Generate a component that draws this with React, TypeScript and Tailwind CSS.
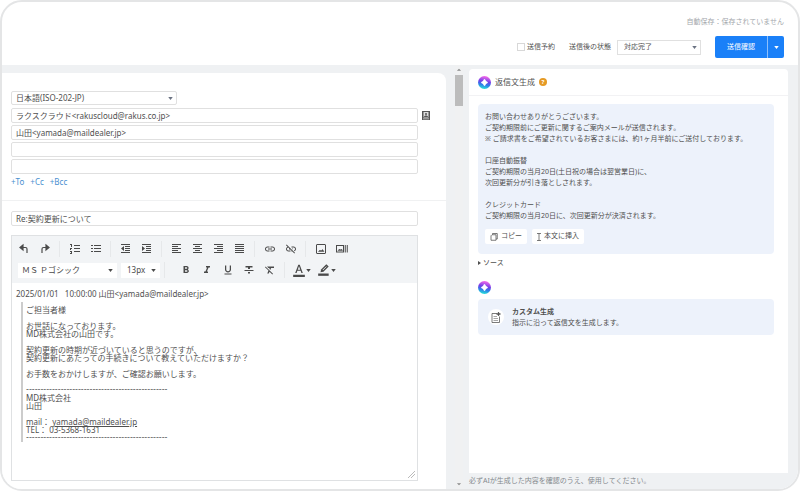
import type { ReactNode } from "react";
import {
  MdArrowDropDown,
  MdArrowDropUp,
  MdFormatBold,
  MdFormatClear,
  MdFormatColorText,
  MdFormatItalic,
  MdFormatStrikethrough,
  MdFormatUnderlined,
  MdInsertLink,
  MdLinkOff,
} from "react-icons/md";

function Caret({ className = "" }: { className?: string }) {
  return (
    <svg viewBox="0 0 6 4" className={`pointer-events-none h-[3px] w-[5px] ${className}`} fill="currentColor">
      <path d="M0 0h6L3 4z" />
    </svg>
  );
}

function UndoIcon() {
  return (
    <svg viewBox="0 0 24 24" className="size-3" fill="none" stroke="currentColor" strokeWidth="2.4">
      <path d="M6 9h9a3 3 0 0 1 3 3v8" />
      <path d="M10 4 4 9l6 5z" fill="currentColor" />
    </svg>
  );
}

function RedoIcon() {
  return (
    <svg viewBox="0 0 24 24" className="size-3" fill="none" stroke="currentColor" strokeWidth="2.4">
      <path d="M18 9H9a3 3 0 0 0-3 3v8" />
      <path d="m14 4 6 5-6 5z" fill="currentColor" />
    </svg>
  );
}

// text layout icons, drawn on a 10px grid so the rules stay sharp
function LineIcon({ d }: { d: string }) {
  return (
    <svg viewBox="0 0 10 10" className="size-2.5" fill="currentColor">
      <path d={d} />
    </svg>
  );
}

const lines = {
  numbered: "M4 1h6v1H4zM4 4h6v1H4zM4 7h6v1H4zM0 0h2v3H1V1H0zM0 4h2v1H1v1H0zM0 7h2v3H0V9h1V8H0z",
  bulleted: "M3 1h7v1H3zM3 4h7v1H3zM3 7h7v1H3zM0 1h2v1H0zM0 4h2v1H0zM0 7h2v1H0z",
  outdent: "M0 0h9v1H0zM4 2h5v1H4zM4 4h5v1H4zM4 6h5v1H4zM0 8h9v1H0zM3 2v5L0 4.500z",
  indent: "M0 0h9v1H0zM4 2h5v1H4zM4 4h5v1H4zM4 6h5v1H4zM0 8h9v1H0zM0 2v5l3-2.500z",
  left: "M0 0h9v1H0zM0 2h6v1H0zM0 4h9v1H0zM0 6h6v1H0zM0 8h9v1H0z",
  center: "M0 0h9v1H0zM2 2h5v1H2zM0 4h9v1H0zM2 6h5v1H2zM0 8h9v1H0z",
  right: "M0 0h9v1H0zM3 2h6v1H3zM0 4h9v1H0zM3 6h6v1H3zM0 8h9v1H0z",
  justify: "M0 0h9v1H0zM0 2h9v1H0zM0 4h9v1H0zM0 6h9v1H0zM0 8h9v1H0z",
};

function ImageIcon() {
  return (
    <svg viewBox="0 0 24 24" className="size-3" fill="none" stroke="currentColor" strokeWidth="2">
      <rect x="3" y="3" width="18" height="18" rx="1" />
      <path d="m7 17 3-3 2 2 3-3 3 4z" fill="currentColor" strokeWidth="1" />
    </svg>
  );
}

function MediaIcon() {
  return (
    <svg viewBox="0 0 28 24" className="h-3 w-3.5" fill="none" stroke="currentColor" strokeWidth="2">
      <rect x="3" y="5" width="14" height="13" />
      <path d="m6 15 3-3 2 2 2-2 2 3z" fill="currentColor" strokeWidth="1" />
      <path d="M20.500 4v15M24.500 4v15" strokeWidth="2" />
    </svg>
  );
}

function MarkerIcon() {
  return (
    <svg viewBox="0 0 24 24" className="size-3.5" fill="currentColor">
      <path d="m6 16 1-5 9-9 4 4-9 9z" />
      <path d="m10 12 6-6" stroke="#f2f4f6" strokeWidth="1.500" />
      <path d="M2 18h18v4H2z" />
    </svg>
  );
}

function AiLogo() {
  return (
    <svg viewBox="0 0 26 26" className="size-[13px] shrink-0">
      <defs>
        <linearGradient id="ai" x1="0.700" y1="0" x2="0.500" y2="1">
          <stop offset="0.050" stopColor="#f569e8" />
          <stop offset="0.450" stopColor="#7040ea" />
          <stop offset="0.700" stopColor="#2f7fe8" />
          <stop offset="1" stopColor="#25e0d8" />
        </linearGradient>
      </defs>
      <circle cx="13" cy="13" r="13" fill="url(#ai)" />
      <path
        d="M13 8c1 3 2 4 5 5-3 1-4 2-5 5-1-3-2-4-5-5 3-1 4-2 5-5z"
        fill="#fff"
        stroke="#fff"
        strokeWidth="3.500"
        strokeLinejoin="round"
      />
    </svg>
  );
}

function Tool({ label, children }: { label: string; children: ReactNode }) {
  return (
    <button type="button" aria-label={label} className="flex h-4 w-[21px] items-center justify-center text-xs">
      {children}
    </button>
  );
}

function Divider() {
  return <span className="mx-1 h-4 w-px bg-[#e6e8ea]" />;
}

const recipients = [
  "ラクスクラウド<rakuscloud@rakus.co.jp>",
  "山田<yamada@maildealer.jp>",
  "",
  "",
];

function Header() {
  return (
    <header className="h-[63px] pt-3 pr-3.5 text-[7px]">
      <p className="text-right leading-4 text-[#a4a7ac]">自動保存：保存されていません</p>
      <div className="mt-1.5 flex items-center justify-end">
        <label className="flex items-center gap-0.5">
          <input type="checkbox" className="size-2 appearance-none border border-[#d8d8d8] bg-white" />
          送信予約
        </label>
        <label htmlFor="status" className="ml-3.5">送信後の状態</label>
        <div className="relative ml-1.5">
          <select id="status" className="block h-[15px] w-[84px] appearance-none border border-[#e0e0e0] pl-1.5">
            <option>対応完了</option>
          </select>
          <Caret className="absolute top-1.5 right-1 text-gray-500" />
        </div>
        <div className="ml-3.5 flex h-[22px] overflow-hidden rounded-xs bg-[#1a80f8] text-white">
          <button type="button" className="w-[52px]">送信確認</button>
          <button type="button" aria-label="送信メニュー" className="flex w-[17px] items-center justify-center border-l border-[#8ec0fc]">
            <Caret />
          </button>
        </div>
      </div>
    </header>
  );
}

function Toolbar() {
  return (
    <div className="flex h-[47px] flex-col justify-center gap-[5px] bg-[#f2f4f6] pl-px text-[#4a4a4a]">
      <div className="flex items-center">
        <Tool label="元に戻す"><UndoIcon /></Tool>
        <Tool label="やり直し"><RedoIcon /></Tool>
        <Divider />
        <Tool label="番号付きリスト"><LineIcon d={lines.numbered} /></Tool>
        <Tool label="箇条書き"><LineIcon d={lines.bulleted} /></Tool>
        <Divider />
        <Tool label="インデント解除"><LineIcon d={lines.outdent} /></Tool>
        <Tool label="インデント"><LineIcon d={lines.indent} /></Tool>
        <Divider />
        <Tool label="左揃え"><LineIcon d={lines.left} /></Tool>
        <Tool label="中央揃え"><LineIcon d={lines.center} /></Tool>
        <Tool label="右揃え"><LineIcon d={lines.right} /></Tool>
        <Tool label="両端揃え"><LineIcon d={lines.justify} /></Tool>
        <Divider />
        <Tool label="リンク"><MdInsertLink /></Tool>
        <Tool label="リンク解除"><MdLinkOff /></Tool>
        <Divider />
        <Tool label="画像"><ImageIcon /></Tool>
        <Tool label="メディア"><MediaIcon /></Tool>
      </div>
      <div className="flex items-center">
        <div className="relative ml-[5px]">
          <select aria-label="フォント" className="block h-[15px] w-[99px] appearance-none bg-white pl-1 text-[8px]">
            <option>ＭＳ Ｐゴシック</option>
          </select>
          <Caret className="absolute top-1.5 right-1" />
        </div>
        <div className="relative ml-1">
          <select aria-label="文字サイズ" className="block h-[15px] w-[39px] appearance-none bg-white pl-1.5 text-[8px]">
            <option>13px</option>
          </select>
          <Caret className="absolute top-1.5 right-1" />
        </div>
        <Divider />
        <span className="w-1.5" />
        <Tool label="太字"><MdFormatBold /></Tool>
        <Tool label="斜体"><MdFormatItalic /></Tool>
        <Tool label="下線"><MdFormatUnderlined /></Tool>
        <Tool label="取り消し線"><MdFormatStrikethrough /></Tool>
        <Tool label="書式クリア"><MdFormatClear /></Tool>
        <Divider />
        <button type="button" aria-label="文字色" className="flex w-[25px] items-center justify-center text-sm">
          <MdFormatColorText />
          <Caret />
        </button>
        <button type="button" aria-label="背景色" className="flex w-[25px] items-center justify-center">
          <MarkerIcon />
          <Caret />
        </button>
      </div>
    </div>
  );
}

function SignatureRule() {
  return <p className="font-['DejaVu_Sans',sans-serif]">-------------------------------------------------</p>;
}

function MailForm() {
  return (
    <section className="mt-2 flex w-[444px] shrink flex-col rounded-tr-lg bg-white pt-[18px] text-[8px]">
      <div className="pr-7 pl-[9px]">
        <div className="relative w-[166px]">
          <select aria-label="文字コード" className="block h-[14px] w-full appearance-none rounded-xs border border-[#e0e0e0] pl-1">
            <option>日本語(ISO-202-JP)</option>
          </select>
          <Caret className="absolute top-1.5 right-1 text-gray-500" />
        </div>
        <div className="relative mt-[3px] flex flex-col gap-0.5">
          {recipients.map((value, i) => (
            <input
              key={i}
              aria-label={`宛先${i + 1}`}
              defaultValue={value}
              className="h-[15px] w-full rounded-xs border border-[#e0e0e0] px-1"
            />
          ))}
          <button type="button" aria-label="アドレス帳" className="absolute top-[3px] -right-3">
            <svg viewBox="0 0 16 18" className="h-[9px] w-2">
              <path d="M0 0h16v18H0z" fill="#555" />
              <path d="M3 2h10v11H3z" fill="#ddd" />
              <circle cx="8" cy="6" r="2" fill="#555" />
              <path d="M4 12c0-4 8-4 8 0z" fill="#555" />
              <path d="M2 15h12v1.500H2z" fill="#ddd" />
            </svg>
          </button>
        </div>
        <div className="mt-0.5 flex h-3 items-center gap-1.5 text-[#4a90d0]">
          <a href="#to">+To</a>
          <a href="#cc">+Cc</a>
          <a href="#bcc">+Bcc</a>
        </div>
      </div>
      <div className="mt-3 flex grow flex-col border-t border-[#f0f1f2] pt-2.5 pr-7 pb-2 pl-[9px]">
        <input
          aria-label="件名"
          defaultValue="Re:契約更新について"
          className="h-[15px] w-full rounded-xs border border-[#e0e0e0] px-1"
        />
        <div className="relative mt-[9px] grow border border-[#dfe1e3]">
          <Toolbar />
          <div className="px-1 pt-1.5 leading-[8px] text-[#505050]">
            <p className="leading-[10px] whitespace-pre">2025/01/01   10:00:00 山田&lt;yamada@maildealer.jp&gt;</p>
            <blockquote className="mt-[3px] ml-[5px] border-l-2 border-[#ccc] pt-1 pl-[3px] whitespace-pre">
              <p>ご担当者様</p>
              <p className="mt-2">お世話になっております。</p>
              <p>MD株式会社の山田です。</p>
              <p className="mt-2">契約更新の時期が近づいていると思うのですが、</p>
              <p>契約更新にあたっての手続きについて教えていただけますか？</p>
              <p className="mt-2">お手数をおかけしますが、ご確認お願いします。</p>
              <div className="mt-2">
                <SignatureRule />
              </div>
              <p>MD株式会社</p>
              <p>山田</p>
              <p className="mt-2">mail： <a href="mailto:yamada@maildealer.jp" className="underline">yamada@maildealer.jp</a></p>
              <p>TEL： 03-5368-1631</p>
              <SignatureRule />
            </blockquote>
          </div>
          <svg viewBox="0 0 8 8" className="absolute right-0.5 bottom-0.5 size-2" stroke="#bbb">
            <path d="M1 8 8 1M4 8l4-4" />
          </svg>
        </div>
      </div>
    </section>
  );
}

function ScrollBar() {
  return (
    <div className="ml-[9px] flex w-2 shrink-0 flex-col items-center bg-[#f0f1f2] text-[#888]">
      <MdArrowDropUp className="size-2.5" />
      <div className="h-[31px] w-full bg-[#bcbcbc]" />
      <MdArrowDropDown className="mt-auto size-2.5" />
    </div>
  );
}

function AiPanel() {
  return (
    <aside className="ml-1.5 flex min-w-0 flex-1 flex-col pt-1 pr-2.5 text-[7px]">
      <div className="grow rounded-t-sm bg-white">
        <div className="flex h-[27px] items-center gap-1 border-b border-[#f2f2f4] pl-[9px]">
          <AiLogo />
          <h2 className="text-[8px]">返信文生成</h2>
          <button type="button" aria-label="ヘルプ" className="flex size-2 items-center justify-center rounded-full bg-[#e59a25] text-[6px] font-bold text-white">
            ?
          </button>
        </div>
        <div className="pt-2 pr-3.5 pl-[9px]">
          <div className="h-[150px] rounded-sm bg-[#edf2fb] px-[7px] pt-[7px]">
            <div className="leading-[11px] whitespace-pre">
              <p>お問い合わせありがとうございます。</p>
              <p>ご契約期限前にご更新に関するご案内メールが送信されます。</p>
              <p>※ ご請求書をご希望されているお客さまには、約1ヶ月半前にご送付しております。</p>
              <p className="mt-[11px]">口座自動振替</p>
              <p>ご契約期限の当月20日(土日祝の場合は翌営業日)に、</p>
              <p>次回更新分が引き落としされます。</p>
              <p className="mt-[11px]">クレジットカード</p>
              <p>ご契約期限の当月20日に、次回更新分が決済されます。</p>
            </div>
            <div className="mt-2 flex gap-[5px]">
              <button type="button" className="flex h-[15px] items-center gap-[3px] rounded-xs bg-white px-[5px]">
                <svg viewBox="0 0 16 16" className="size-2" fill="none" stroke="currentColor" strokeWidth="1.500">
                  <path d="M4 3.500h8v11H2v-9z" />
                  <path d="M5 3V1h9.500v11H12" />
                </svg>
                コピー
              </button>
              <button type="button" className="flex h-[15px] items-center gap-[3px] rounded-xs bg-white px-[5px]">
                <svg viewBox="0 0 8 16" className="h-2 w-1" fill="none" stroke="currentColor" strokeWidth="1.500">
                  <path d="M0 1h8M0 15h8M4 1v14" />
                </svg>
                本文に挿入
              </button>
            </div>
          </div>
          <button type="button" className="mt-[3px] flex h-3 items-center gap-0.5">
            <svg viewBox="0 0 3 4" className="h-1 w-[3px]" fill="currentColor">
              <path d="M0 0v4l3-2z" />
            </svg>
            ソース
          </button>
          <div className="mt-3">
            <AiLogo />
          </div>
          <button type="button" className="mt-[5px] flex h-9 w-full items-center gap-2 rounded-sm bg-[#edf2fb] pl-2.5 text-left">
            <span className="flex size-4 items-center justify-center rounded-full bg-white">
              <svg viewBox="0 0 20 22" className="h-[11px] w-2.5" fill="none" stroke="currentColor" strokeWidth="1.500">
                <path d="M12 3H2v18h15V9" />
                <path d="M5 9h7M5 13h9M5 17h9" strokeWidth="1" />
                <path d="M15 0c.6 3 1.400 3.600 4 4-2.600.6-3.400 1.400-4 4-.6-2.600-1.400-3.400-4-4 2.600-.4 3.400-1 4-4z" fill="currentColor" />
              </svg>
            </span>
            <span className="leading-[11px]">
              <strong className="block">カスタム生成</strong>
              指示に沿って返信文を生成します。
            </span>
          </button>
        </div>
      </div>
      <p className="h-4 leading-4 text-[#85898e]">必ずAIが生成した内容を確認のうえ、使用してください。</p>
    </aside>
  );
}

export default function App() {
  return (
    <div lang="ja" className="flex min-h-screen flex-col overflow-hidden rounded-[22px] border-2 border-[#e4e5e6] bg-white font-['Noto_Sans','Noto_Sans_CJK_JP',sans-serif] text-[#505050]">
      <Header />
      <main className="flex grow bg-[#eff1f3]">
        <MailForm />
        <ScrollBar />
        <AiPanel />
      </main>
    </div>
  );
}
